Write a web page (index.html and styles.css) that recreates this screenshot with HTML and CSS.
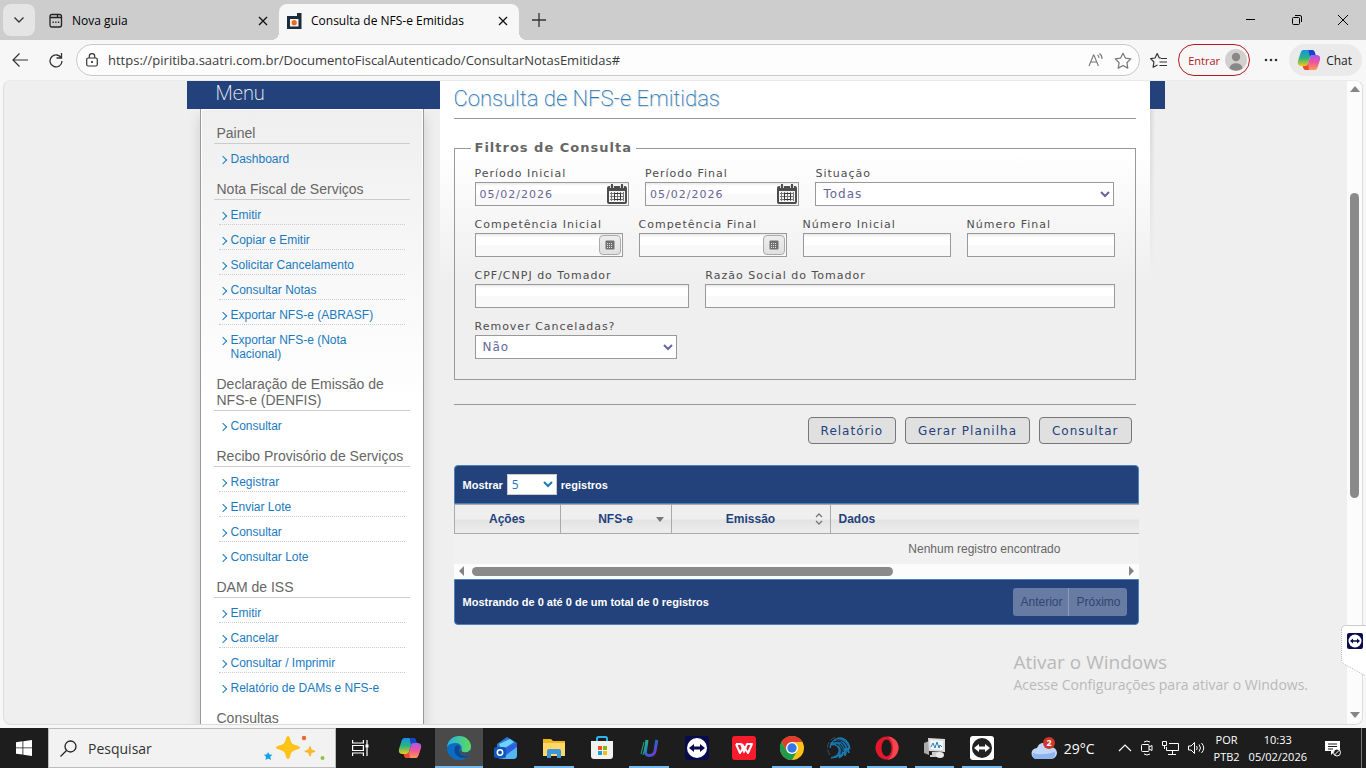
FILE: index.html
```html
<!DOCTYPE html>
<html lang="pt-BR">
<head>
    <meta charset="UTF-8">
    <meta name="viewport" content="width=device-width, initial-scale=1.0">
    <title>Consulta de NFS-e Emitidas</title>
    <link rel="stylesheet" href="styles.css">
</head>
<body>
    <!-- Abas do navegador -->
    <div class="tab-bar">
        <button class="tab-list" aria-label="Abas"><svg width="12" height="8" viewBox="0 0 12 8"><path d="M1.500 1.500 6 6l4.500-4.500" fill="none" stroke="#333" stroke-width="1.300"/></svg></button>
        <div class="tab">
            <svg width="14" height="16" viewBox="0 0 14 16" fill="none" stroke="#222" stroke-width="1.300"><path d="M3 1.500h5.500v3h4V12q0 2-2 2H3q-2 0-2-2V3.500q0-2 2-2zM1 4.500h8M9 1.500h1.500q2 0 2 2v1"/><path d="M3.500 9.300h1.300M6.200 9.300h1.300M8.900 9.300h1.300" stroke-width="1.500"/></svg>
            <span>Nova guia</span>
            <button aria-label="Fechar aba"><svg width="10" height="10" viewBox="0 0 10 10"><path d="m1 1 8 8M9 1 1 9" stroke="#111" stroke-width="1.300"/></svg></button>
        </div>
        <div class="tab active">
            <svg width="15" height="16" viewBox="0 0 15 16"><path d="M10 0h4.500v16H0V3h10z" fill="#1c2c3b"/><path d="M3 6h8.500v7.500H3z" fill="#f4f4f4"/><circle cx="7.200" cy="9.700" r="2.600" fill="#ee6a1d"/></svg>
            <span>Consulta de NFS-e Emitidas</span>
            <button aria-label="Fechar aba"><svg width="10" height="10" viewBox="0 0 10 10"><path d="m1 1 8 8M9 1 1 9" stroke="#111" stroke-width="1.300"/></svg></button>
        </div>
        <button class="new-tab" aria-label="Nova aba"><svg width="14" height="14" viewBox="0 0 14 14"><path d="M7 0v14M0 7h14" stroke="#333" stroke-width="1.300"/></svg></button>
        <div class="window-buttons">
            <button aria-label="Minimizar"><svg width="10" height="10" viewBox="0 0 10 10"><path d="M0 4.500h9" stroke="#000"/></svg></button>
            <button aria-label="Restaurar"><svg width="10" height="10" viewBox="0 0 10 10" fill="none" stroke="#000"><rect x=".5" y="2.500" width="7" height="7" rx="1"/><path d="M3 .5h5q1.500 0 1.500 1.500v5"/></svg></button>
            <button aria-label="Fechar"><svg width="10" height="10" viewBox="0 0 10 10"><path d="m0 0 10 10M10 0 0 10" stroke="#000"/></svg></button>
        </div>
    </div>

    <!-- Barra de endereço -->
    <div class="toolbar">
        <button aria-label="Voltar"><svg width="16" height="14" viewBox="0 0 16 14"><path d="M7.500.5 1 7l6.500 6.500M1 7h15" fill="none" stroke="#333" stroke-width="1.200"/></svg></button>
        <button aria-label="Atualizar"><svg width="14" height="16" viewBox="0 0 14 16"><path d="M12.500 6.500A6 6 0 1 0 13 9M12.500 1v5h-5" fill="none" stroke="#333" stroke-width="1.300"/></svg></button>
        <div class="address">
            <svg width="12" height="14" viewBox="0 0 12 14" fill="none" stroke="#333" stroke-width="1.200"><rect x=".7" y="5" width="10.600" height="8" rx="1.500"/><path d="M3.300 5V3.300a2.700 2.700 0 0 1 5.400 0V5"/><circle cx="6" cy="9" r=".5" fill="#333"/></svg>
            <input type="text" aria-label="Endereço" value="https://piritiba.saatri.com.br/DocumentoFiscalAutenticado/ConsultarNotasEmitidas#">
            <button aria-label="Ler em voz alta"><svg width="16" height="16" viewBox="0 0 16 16" fill="none" stroke="#777" stroke-width="1.100"><path d="M1 14 5.500 3h.4L10.400 14M2.700 10h6"/><path d="M9.500 3q1.500 1 1.500 3M11.500 1.500q2.700 2 2.500 5.500"/></svg></button>
            <button aria-label="Favorito"><svg width="18" height="17" viewBox="0 0 18 17"><path d="m9 1.200 2.400 4.900 5.400.8-3.900 3.800.9 5.400L9 13.500l-4.800 2.600.9-5.400L1.200 6.900l5.400-.8z" fill="none" stroke="#777" stroke-width="1.200" stroke-linejoin="round"/></svg></button>
        </div>
        <button aria-label="Favoritos"><svg width="18" height="17" viewBox="0 0 18 17" fill="none" stroke="#333" stroke-width="1.200" stroke-linejoin="round"><path d="M11 6 9.300 6 7.200 1.500 5 6l-4.400.7L3.900 10l-.8 5.300L7.500 13"/><path d="M11 6.500h6M9.500 10H17M9.500 13.500H17"/></svg></button>
        <button class="sign-in">Entrar <svg width="22" height="22" viewBox="0 0 22 22"><circle cx="11" cy="11" r="11" fill="#d2d0ce"/><circle cx="11" cy="8" r="4.200" fill="#8a8886"/><path d="M4.500 19.500c.5-7 12.500-7 13 0a11 11 0 0 1-13 0z" fill="#8a8886"/></svg></button>
        <button class="more" aria-label="Mais"><svg width="14" height="4" viewBox="0 0 14 4" fill="#333"><circle cx="2" cy="2" r="1.300"/><circle cx="7" cy="2" r="1.300"/><circle cx="12" cy="2" r="1.300"/></svg></button>
        <button class="chat"><svg width="24" height="22" viewBox="0 0 24 22"><use href="#copilot"/></svg> Chat</button>
    </div>

    <!-- Página -->
    <div class="viewport">
        <div class="page">
            <div class="portal">
                <nav class="sidebar">
                    <h2>Menu</h2>
                    <div class="menu">
                        <h3>Painel</h3>
                        <ul>
                            <li><a href="#">Dashboard</a></li>
                        </ul>
                        <h3>Nota Fiscal de Serviços</h3>
                        <ul>
                            <li><a href="#">Emitir</a></li>
                            <li><a href="#">Copiar e Emitir</a></li>
                            <li><a href="#">Solicitar Cancelamento</a></li>
                            <li><a href="#">Consultar Notas</a></li>
                            <li><a href="#">Exportar NFS-e (ABRASF)</a></li>
                            <li><a href="#">Exportar NFS-e (Nota Nacional)</a></li>
                        </ul>
                        <h3>Declaração de Emissão de NFS-e (DENFIS)</h3>
                        <ul>
                            <li><a href="#">Consultar</a></li>
                        </ul>
                        <h3>Recibo Provisório de Serviços</h3>
                        <ul>
                            <li><a href="#">Registrar</a></li>
                            <li><a href="#">Enviar Lote</a></li>
                            <li><a href="#">Consultar</a></li>
                            <li><a href="#">Consultar Lote</a></li>
                        </ul>
                        <h3>DAM de ISS</h3>
                        <ul>
                            <li><a href="#">Emitir</a></li>
                            <li><a href="#">Cancelar</a></li>
                            <li><a href="#">Consultar / Imprimir</a></li>
                            <li><a href="#">Relatório de DAMs e NFS-e</a></li>
                        </ul>
                        <h3>Consultas</h3>
                    </div>
                </nav>

                <main class="content">
                    <h1>Consulta de NFS-e Emitidas</h1>

                    <form>
                        <fieldset>
                            <legend>Filtros de Consulta</legend>
                            <div class="row periods">
                                <div class="field">
                                    <label for="periodo-inicial">Período Inicial</label>
                                    <div class="box">
                                        <input type="text" id="periodo-inicial" value="05/02/2026">
                                        <button type="button" class="pick" aria-label="Calendário"><svg width="20" height="20" viewBox="0 0 20 20"><use href="#calendar"/></svg></button>
                                    </div>
                                </div>
                                <div class="field">
                                    <label for="periodo-final">Período Final</label>
                                    <div class="box">
                                        <input type="text" id="periodo-final" value="05/02/2026">
                                        <button type="button" class="pick" aria-label="Calendário"><svg width="20" height="20" viewBox="0 0 20 20"><use href="#calendar"/></svg></button>
                                    </div>
                                </div>
                                <div class="field">
                                    <label for="situacao">Situação</label>
                                    <select id="situacao"><option>Todas</option></select>
                                </div>
                            </div>
                            <div class="row numbers">
                                <div class="field">
                                    <label for="comp-inicial">Competência Inicial</label>
                                    <div class="box">
                                        <input type="text" id="comp-inicial">
                                        <button type="button" class="month" aria-label="Calendário"><svg width="10" height="10" viewBox="0 0 10 10"><use href="#month"/></svg></button>
                                    </div>
                                </div>
                                <div class="field">
                                    <label for="comp-final">Competência Final</label>
                                    <div class="box">
                                        <input type="text" id="comp-final">
                                        <button type="button" class="month" aria-label="Calendário"><svg width="10" height="10" viewBox="0 0 10 10"><use href="#month"/></svg></button>
                                    </div>
                                </div>
                                <div class="field">
                                    <label for="num-inicial">Número Inicial</label>
                                    <div class="box"><input type="text" id="num-inicial"></div>
                                </div>
                                <div class="field">
                                    <label for="num-final">Número Final</label>
                                    <div class="box"><input type="text" id="num-final"></div>
                                </div>
                            </div>
                            <div class="row taker">
                                <div class="field">
                                    <label for="cpf">CPF/CNPJ do Tomador</label>
                                    <div class="box"><input type="text" id="cpf"></div>
                                </div>
                                <div class="field">
                                    <label for="razao">Razão Social do Tomador</label>
                                    <div class="box"><input type="text" id="razao"></div>
                                </div>
                            </div>
                            <div class="row canceled">
                                <div class="field">
                                    <label for="remover">Remover Canceladas?</label>
                                    <select id="remover"><option>Não</option></select>
                                </div>
                            </div>
                        </fieldset>
                        <div class="actions">
                            <button type="button">Relatório</button>
                            <button type="button">Gerar Planilha</button>
                            <button type="button">Consultar</button>
                        </div>
                    </form>

                    <!-- Tabela de resultados -->
                    <div class="results">
                        <div class="results-top">
                            <label for="mostrar">Mostrar</label>
                            <select id="mostrar"><option>5</option></select>
                            <span>registros</span>
                        </div>
                        <div class="table-wrap">
                            <table>
                                <thead>
                                    <tr>
                                        <th class="col-actions">Ações</th>
                                        <th class="col-nfse"><div class="sort">NFS-e <svg width="8" height="5" viewBox="0 0 8 5"><path d="M0 0h8L4 5z" fill="#777"/></svg></div></th>
                                        <th class="col-date"><div class="sort">Emissão <svg width="8" height="12" viewBox="0 0 8 12"><path d="m1 4 3-3 3 3M1 8l3 3 3-3" fill="none" stroke="#777" stroke-width="1.300"/></svg></div></th>
                                        <th class="col-data">Dados</th>
                                    </tr>
                                </thead>
                                <tbody>
                                    <tr><td colspan="4">Nenhum registro encontrado</td></tr>
                                </tbody>
                            </table>
                        </div>
                        <div class="h-scroll">
                            <svg width="5" height="10" viewBox="0 0 5 10"><path d="M5 0v10L0 5z" fill="#858585"/></svg>
                            <div class="h-track"><div class="h-thumb"></div></div>
                            <svg width="5" height="10" viewBox="0 0 5 10"><path d="M0 0v10l5-5z" fill="#858585"/></svg>
                        </div>
                        <div class="results-bottom">
                            <span>Mostrando de 0 até 0 de um total de 0 registros</span>
                            <div class="pager">
                                <button disabled>Anterior</button>
                                <button disabled>Próximo</button>
                            </div>
                        </div>
                    </div>
                </main>
            </div>
        </div>
        <div class="v-scroll">
            <svg width="10" height="6" viewBox="0 0 10 6"><path d="M0 6h10L5 0z" fill="#858585"/></svg>
            <div class="v-track"><div class="v-thumb"></div></div>
            <svg width="10" height="6" viewBox="0 0 10 6"><path d="M0 0h10L5 6z" fill="#858585"/></svg>
        </div>
    </div>

    <div class="watermark">
        <div class="watermark-title">Ativar o Windows</div>
        <div>Acesse Configurações para ativar o Windows.</div>
    </div>

    <div class="side-tab">
        <svg width="25" height="52" viewBox="0 0 25 52"><path d="M25 .5H5Q.5.500.5 5v30q0 2.500 2.500 4L25 51z" fill="#fff"/><path d="M25 .5H5Q.5.500.5 5" fill="none" stroke="#ccc"/><path d="M.5 5v30q0 2.500 2.500 4L25 51" fill="none" stroke="#bbb" stroke-dasharray="1 1"/><rect x="6" y="8" width="16" height="16" rx="2" fill="#0a0a50"/><circle cx="14" cy="16" r="6.500" fill="#fff"/><path d="m9 16 3-2.500v1.700h4v-1.700l3 2.500-3 2.500v-1.700h-4v1.700z" fill="#0a0a50"/></svg>
    </div>

    <!-- Barra de tarefas -->
    <div class="taskbar">
        <button class="start" aria-label="Iniciar"><svg width="16" height="16" viewBox="0 0 16 16" fill="#fff"><path d="m0 2.200 6.500-.9v6.200H0zM7.300 1.200 16 0v7.500H7.300zM0 8.300h6.500v6.300L0 13.700zM7.300 8.300H16V16l-8.700-1.200z"/></svg></button>
        <div class="search">
            <svg width="17" height="17" viewBox="0 0 17 17" fill="none" stroke="#222" stroke-width="1.300"><circle cx="10.500" cy="6.500" r="5.500"/><path d="M6.500 10.500.5 16.500"/></svg>
            <input type="text" placeholder="Pesquisar" aria-label="Pesquisar">
            <svg width="62" height="26" viewBox="0 0 62 26"><path d="M24 1q1.700 0 2.600 4.500.9 3.500 4.400 4.500 5 1 5 2.500t-5 2.700q-3.500 1-4.400 4.300Q25.700 24 24 24t-2.600-4.500q-.9-3.300-4.400-4.300-5-1.200-5-2.700T17 10q3.500-1 4.400-4.500Q22.300 1 24 1z" fill="#fcc419"/><path d="M46 11q1 0 1.600 3.400Q51.500 15.400 51.500 16.300t-3.900 1.700Q47 21.500 46 21.500T44.400 18q-3.900-.8-3.900-1.700t3.900-1.900Q45 11 46 11z" fill="#f9b82c"/><path d="m4 17 1.500 2.500 3 .2-2.200 2L7 25l-2.800-1.400L1.500 25l.6-3L0 19.800l3-.5z" fill="#0fa4ea"/><circle cx="40" cy="3" r="2.200" fill="#f0642d"/><circle cx="58.500" cy="23" r="2" fill="#8cc63f"/></svg>
        </div>
        <button class="task-view" aria-label="Visão de tarefas"><svg width="17" height="16" viewBox="0 0 17 16" fill="none" stroke="#fff" stroke-width="1.200"><path d="M.6 0v3h10.800V0M.6 16v-3h10.800v3M.6 5.500h10.800v5H.6zM15 0v16"/><path d="M13.500 6h3" stroke-width="3"/></svg></button>
        <button class="copilot" aria-label="Copilot"><svg width="24" height="22" viewBox="0 0 24 22">
            <defs>
                <linearGradient id="cp-left" x1="0" y1="0" x2="0" y2="1"><stop offset="0" stop-color="#1a8fee"/><stop offset=".5" stop-color="#28b67a"/><stop offset="1" stop-color="#f2c91c"/></linearGradient>
                <linearGradient id="cp-right" x1="0" y1="0" x2="0" y2="1"><stop offset="0" stop-color="#a657f0"/><stop offset=".5" stop-color="#f0569a"/><stop offset="1" stop-color="#ff9a50"/></linearGradient>
                <g id="copilot">
                    <path d="M6 1h9q2 0 2.700 2l.9 3h-3q-2 0-2.600 2l-2 7q-.6 2-2.600 2H4q-4-.5-3-5L3.500 4Q4.500 1 6 1z" fill="url(#cp-left)"/>
                    <path d="M11.500 1H15q2 0 2.700 2l.9 3h-3q-2 0-2.600 2z" fill="#1745c9"/>
                    <path d="M18 21H9q-2 0-2.700-2l-.6-2h2.700q2 0 2.600-2l2-7q.6-2 2.600-2H20q4 .5 3 5l-2.500 7.500Q19.500 21 18 21z" fill="url(#cp-right)"/>
                    <path d="M12 21H9q-2 0-2.700-2l-.6-2h2.700q2 0 2.600-2z" fill="#ec4b2b"/>
                </g>
                <g id="calendar">
                    <path d="M0 4q0-2 2-2h2V0h2v2h8V0h2v2h2q2 0 2 2v14q0 2-2 2H2q-2 0-2-2z" fill="#4d4d4d"/>
                    <path d="M2 7h16v11H2z" fill="#f4f4f4"/>
                    <path d="M3 9.500h14M3 12.500h14M3 15.500h14M4.500 8v9M7.500 8v9M10.500 8v9M13.500 8v9M16.500 8v9" stroke="#777" fill="none"/>
                    <path d="M7.500 9.500h6v6h-6z" fill="none" stroke="#333"/>
                    <path d="M3.500 1v3M6.500 1v3M13.500 1v3M16.500 1v3" stroke="#ddd"/>
                </g>
                <g id="month">
                    <rect x=".5" y=".5" width="9" height="9" rx="1" fill="#707070"/>
                    <path d="M2 3.500h6M2 5.500h6M2 7.500h6" stroke="#e2e2e2" stroke-dasharray="1 1"/>
                </g>
                <linearGradient id="edge-top" x1="0" y1="0" x2="1" y2="0"><stop offset="0" stop-color="#2aaee8"/><stop offset="1" stop-color="#5ddc58"/></linearGradient>
                <linearGradient id="u-app" x1="0" y1="0" x2="1" y2="1"><stop offset="0" stop-color="#24c080"/><stop offset=".5" stop-color="#2866d8"/><stop offset="1" stop-color="#8b2bc9"/></linearGradient>
            </defs>
            <use href="#copilot"/></svg></button>
        <div class="apps">
            <button class="open current" aria-label="Edge"><svg width="24" height="24" viewBox="0 0 24 24"><circle cx="12" cy="12" r="12" fill="#0c6cc4"/><path d="M0 11C1 4 6 0 12 0c7 0 12 5 12 10.500 0 4-3 6-6 6-2.500 0-4-1-3.500-2.500C16 10 12 6.500 8 7c-4 .3-7 2-8 4z" fill="url(#edge-top)"/><path d="M9 9.500c-4 5 0 12.500 7 12.500 3 0 5-1 6.500-3-4 2-10 0-10.500-4-.3-2 1-3 1-3.500 0-1.500-2-3-4-2z" fill="#0b4a93"/><path d="M14.500 14c-.4 1.500 1 2.500 3.500 2.500 2 0 4-.8 5-2.500l-.5 4.500c-4 1.700-10-.2-10.200-4z" fill="#4a4a4a"/></svg></button>
            <button aria-label="Outlook"><svg width="24" height="24" viewBox="0 0 24 24"><path d="M3 8 13 1l10 6v12q0 4-4 4H7q-4 0-4-4z" fill="#2a78dc"/><path d="m5 8 11-5 4 3-12 8z" fill="#70d2fa"/><path d="m6 14 17-7v11q0 5-5 5H9z" fill="#2d60df"/><path d="M8 22 23 11v8q0 4-4 4H9z" fill="#54b5f4"/><rect y="11" width="12" height="11" rx="2" fill="#0f57b8"/><circle cx="6" cy="16.500" r="2.700" fill="none" stroke="#fff" stroke-width="1.500"/></svg></button>
            <button class="open" aria-label="Arquivos"><svg width="22" height="20" viewBox="0 0 22 20"><path d="M0 1h8l2 2h12v15H0z" fill="#f3b71d"/><path d="M0 5h22v13H0z" fill="#ffd869"/><path d="M4 20v-7q0-2 2-2h10q2 0 2 2v7h-4v-4H8v4z" fill="#3c97dc"/></svg></button>
            <button aria-label="Loja"><svg width="24" height="24" viewBox="0 0 24 24"><path d="M7 7V2.500Q7 1 8.500 1h7Q17 1 17 2.500V7" fill="none" stroke="#2cb5ec" stroke-width="2"/><path d="M1 5h22v15q0 3-3 3H4q-3 0-3-3z" fill="#f2f2f2"/><path d="M8 10h4v4H8z" fill="#f25022"/><path d="M13 10h4v4h-4z" fill="#7fba00"/><path d="M8 15h4v4H8z" fill="#00a4ef"/><path d="M13 15h4v4h-4z" fill="#ffb900"/></svg></button>
            <button class="open" aria-label="Aplicativo"><svg width="20" height="20" viewBox="0 0 20 20" fill="none"><path d="M8 2 6.500 13q-.5 4.500 4 4.500t5.500-4.500L17.800 2" stroke="url(#u-app)" stroke-width="3"/><path d="M5 4 2 16M8 2 4 17" stroke="#24a780" stroke-width="1"/></svg></button>
            <button aria-label="TeamViewer"><svg width="24" height="24" viewBox="0 0 24 24"><rect width="24" height="24" rx="3" fill="#090b4f"/><circle cx="12" cy="12" r="10" fill="#fff"/><path d="m4 12 5-4v2.500h6V8l5 4-5 4v-2.500H9V16z" fill="#090b4f"/></svg></button>
            <button aria-label="WPS"><svg width="24" height="24" viewBox="0 0 24 24"><rect width="24" height="24" rx="3" fill="#f81b2b"/><path d="M4 8h5l3 8 3-8h5l-4 9-6-9M4 8l4 9 3-5" fill="none" stroke="#fff" stroke-width="2" stroke-linejoin="round"/></svg></button>
            <button class="open" aria-label="Chrome"><svg width="24" height="24" viewBox="0 0 24 24"><circle cx="12" cy="12" r="12" fill="#fbc116"/><path d="M1.600 6a12 12 0 0 1 20.800 0H12l-5.200 9z" fill="#e33b2e"/><path d="M1.600 6A12 12 0 0 0 12 24l5.200-9-5.200 3-5.200-3z" fill="#229a4c"/><circle cx="12" cy="12" r="6" fill="#fff"/><circle cx="12" cy="12" r="4.700" fill="#3578e5"/></svg></button>
            <button class="open" aria-label="Águia"><svg width="24" height="24" viewBox="0 0 24 24" fill="none" stroke="#1d80ba"><path d="M3 19A11 11 0 0 1 8 1.500" stroke="#3a5260" stroke-dasharray="6 2"/><path d="M4 7q5-6 11-5 7 2 8 11l-2-2q1 3 1 6l-3-4q1 4-1 7l-1-4q-1 5-5 6l1-3q-3 3-9 3 7-2 8-6 1-3-2-6-2-2-6-1l-1 3z" fill="#1473ab"/><path d="M6 6q9-3 12 6M9 4q9-1 12 8M9 8q7 2 5 10M13 8q4 3 3 8" stroke="#1d1d1d"/></svg></button>
            <button class="open" aria-label="Opera"><svg width="24" height="24" viewBox="0 0 24 24"><circle cx="12" cy="12" r="11.500" fill="#e3182d"/><path d="M12 .5a11.500 11.500 0 0 1 0 23c4-1 6-6 6-11.500S16 1.500 12 .5z" fill="#f5454f"/><ellipse cx="11.500" cy="12" rx="5" ry="8.500" fill="#1c1c1c"/></svg></button>
            <button class="open" aria-label="Monitor"><svg width="24" height="24" viewBox="0 0 24 24"><path d="m1 7 5-2v14l-5-2z" fill="#aaa"/><path d="m5 2 17 1v13L6 15z" fill="#ddd"/><path d="m7 4 13 1v9L8 13z" fill="#f1f6fa"/><path d="m8 11 2-4 2 5 2-6 2 6 1-3 2 2" fill="none" stroke="#277fb5"/><path d="M9 16h8v3H9zM7 19h13v2H7z" fill="#ccc"/><ellipse cx="17" cy="19" rx="4" ry="3" fill="#e8e8e8"/></svg></button>
            <button class="open" aria-label="TeamViewer Host"><svg width="24" height="24" viewBox="0 0 24 24"><rect width="24" height="24" rx="3" fill="#fff"/><circle cx="12" cy="12" r="10" fill="#222"/><path d="m4 12 5-4v2.500h6V8l5 4-5 4v-2.500H9V16z" fill="#fff"/></svg></button>
        </div>
        <div class="tray">
            <button class="weather">
                <svg width="26" height="24" viewBox="0 0 26 24"><path d="M6 23a5.500 5.500 0 0 1 0-11 7.500 7.500 0 0 1 14-1 6 6 0 0 1 0 12z" fill="#c1d7f8"/><path d="M4 23q-4-3-2-6 9 3 22-1 1 5-4 7z" fill="#8fb5f0"/><circle cx="18" cy="7" r="6" fill="#d3352b"/><text x="18" y="10" class="badge-text">2</text></svg>
                29°C
            </button>
            <button aria-label="Ícones ocultos"><svg width="14" height="8" viewBox="0 0 14 8"><path d="m1 7 6-6 6 6" fill="none" stroke="#fff" stroke-width="1.200"/></svg></button>
            <button aria-label="Câmera"><svg width="12" height="16" viewBox="0 0 12 16" fill="none" stroke="#fff"><rect x=".5" y="4.500" width="7.500" height="7" rx="1"/><path d="m8 7 3-1.500v5L8 9M3 2q3-2 6 0M3 14q3 2 6 0"/></svg></button>
            <button aria-label="Rede"><svg width="17" height="14" viewBox="0 0 17 14" fill="none" stroke="#fff"><path d="M7 2.500h9.500v7H4.500V6M10.500 9.500v4M6 13.500h8M.5.500h4v4h-4zM2.500 4.500V8"/></svg></button>
            <button aria-label="Volume"><svg width="17" height="14" viewBox="0 0 17 14" fill="none" stroke="#fff"><path d="M.5 5H3l3.500-3.500v11L3 9H.5zM8.500 5q1.500 2 0 4M11 3.500q3 3.500 0 7M13.500 2q4.500 5 0 10"/></svg></button>
            <div class="lang">POR<br>PTB2</div>
            <div class="clock">10:33<br>05/02/2026</div>
            <button class="notify" aria-label="Notificações"><svg width="18" height="17" viewBox="0 0 18 17"><path d="M1 1h15v10h-5l-4 4v-4H1z" fill="#fff"/><path d="M4 4h9M4 6.500h9M4 9h5" stroke="#1d1d1d"/><circle cx="13" cy="12.500" r="3.500" fill="#1d1d1d" stroke="#fff"/><path d="m10.500 15 5-5" stroke="#fff"/></svg></button>
        </div>
    </div>
</body>
</html>
```
FILE: styles.css
```css
* {
    box-sizing: border-box;
}

body {
    margin: 0;
    height: 100vh;
    display: flex;
    flex-direction: column;
    overflow: hidden;
    position: relative;
    background-color: #f7f7f7;
    font-family: "Liberation Sans", Arial, sans-serif;
    font-size: 12px;
}

button {
    border: none;
    padding: 0;
    background: transparent;
    font-family: inherit;
    display: flex;
    align-items: center;
    justify-content: center;
    flex-shrink: 0;
}

svg {
    display: block;
    flex-shrink: 0;
}

h1, h2, h3, ul {
    margin: 0;
    padding: 0;
}

/* Abas */
.tab-bar {
    height: 40px;
    flex-shrink: 0;
    background-color: #cdcdcd;
    display: flex;
    align-items: center;
    padding-left: 3px;
    font-family: "Open Sans", sans-serif;
    font-size: 12px;
}

.tab-list {
    width: 32px;
    height: 32px;
    border-radius: 8px;
    background-color: #e5e5e5;
}

.tab {
    width: 240px;
    height: 36px;
    margin-top: 4px;
    padding: 0 11px 3px 8px;
    display: flex;
    align-items: center;
    gap: 9px;
    position: relative;
}

.tab:not(.active) {
    margin-left: 4px;
    padding-left: 10px;
}

.tab span {
    flex: 1;
    white-space: nowrap;
}

.tab.active {
    background-color: #f7f7f7;
    border-radius: 8px 8px 0 0;
}

.tab.active::before,
.tab.active::after {
    content: "";
    position: absolute;
    bottom: 0;
    width: 8px;
    height: 8px;
}

.tab.active::before {
    left: -8px;
    background: radial-gradient(circle at 0 0, transparent 8px, #f7f7f7 8px);
}

.tab.active::after {
    right: -8px;
    background: radial-gradient(circle at 100% 0, transparent 8px, #f7f7f7 8px);
}

.new-tab {
    width: 40px;
    height: 40px;
}

.window-buttons {
    margin-left: auto;
    display: flex;
}

.window-buttons button {
    width: 46px;
    height: 40px;
}

/* Barra de endereço */
.toolbar {
    height: 40px;
    flex-shrink: 0;
    display: flex;
    align-items: center;
    padding: 0 4px 0 12px;
    gap: 10px;
    font-family: "Open Sans", sans-serif;
}

.toolbar > button:nth-child(2) {
    margin: 0 3px 0 11px;
}

.address {
    flex: 1;
    height: 32px;
    display: flex;
    align-items: center;
    gap: 10px;
    padding: 0 7px 0 9px;
    background-color: #fdfdfd;
    border: 1px solid #c9c9c9;
    border-radius: 16px;
}

.address input {
    flex: 1;
    min-width: 0;
    border: none;
    outline: none;
    padding: 0;
    background: transparent;
    color: #3b3b3b;
    font-family: inherit;
    font-size: 13px;
}

.sign-in {
    height: 32px;
    gap: 5px;
    padding: 0 2px 0 9px;
    border: 1px solid #b4191d;
    border-radius: 16px;
    color: #b4191d;
    font-size: 11px;
}

.more {
    margin: 0 1px 0 4px;
}

.chat {
    height: 32px;
    gap: 5px;
    padding: 0 10px 0 8px;
    border-radius: 16px;
    background-color: #eaeaea;
    color: #222;
    font-size: 12px;
}

/* Página */
.viewport {
    flex: 1;
    min-height: 0;
    margin: 0 3px 3px;
    display: flex;
    overflow: hidden;
    background-color: #efefef;
    border: 1px solid #ddd;
    border-top-color: #eaeaea;
    border-radius: 8px;
}

.page {
    flex: 1;
    min-width: 0;
    overflow: hidden;
}

.portal {
    max-width: 978px;
    margin: 0 auto;
    padding: 0 15px 0 13px;
    display: flex;
    align-items: flex-start;
    gap: 16px;
    background: linear-gradient(#23427b, #23427b) top / 100% 28px no-repeat;
}

/* Menu lateral */
.sidebar {
    width: 224px;
    flex-shrink: 0;
}

.sidebar h2 {
    height: 28px;
    line-height: 24px;
    padding-left: 16px;
    color: #fff;
    font-family: Roboto, sans-serif;
    font-size: 20px;
    font-weight: 200;
}

.menu {
    border: 1px solid #999;
    border-top: none;
    padding: 16px 13px;
    background: linear-gradient(#efefef, #fff 300px);
    box-shadow: inset 0 0 0 1px #fff, 0 8px 12px rgba(0, 0, 0, 0.15);
}

.menu h3 {
    padding: 0 0 2px 3px;
    color: #666;
    font-size: 14px;
    font-weight: normal;
    line-height: 16px;
    border-bottom: 1px solid #ccc;
}

.menu ul {
    list-style: none;
    margin: 0 5px 13px;
}

.menu li {
    padding: 8px 12px 2px;
    line-height: 14px;
    border-bottom: 1px dotted #ccc;
    position: relative;
}

.menu li:last-child {
    border-bottom: none;
}

.menu li::before {
    content: "";
    position: absolute;
    left: 1px;
    top: 13px;
    width: 5px;
    height: 5px;
    border-top: 1px solid #1a7abf;
    border-right: 1px solid #1a7abf;
    transform: rotate(45deg);
}

.menu a {
    color: #1a7abf;
    text-decoration: none;
}

/* Conteúdo */
.content {
    flex: 1;
    min-width: 0;
    padding: 0 14px;
    background: linear-gradient(#fff 70px, #efefef 200px);
    position: relative;
    font-family: Verdana, "DejaVu Sans", sans-serif;
}

.content::after {
    content: "";
    position: absolute;
    top: 29px;
    left: 100%;
    width: 5px;
    height: 160px;
    background: linear-gradient(to right, rgba(0, 0, 0, 0.1), transparent);
    -webkit-mask-image: linear-gradient(#000, transparent);
    mask-image: linear-gradient(#000, transparent);
}

h1 {
    height: 38px;
    line-height: 36px;
    border-bottom: 1px solid #999;
    color: #1a7abf;
    font-family: Roboto, sans-serif;
    font-size: 22px;
    font-weight: 200;
    text-shadow: 1px 1px 1px #ccc;
}

form {
    padding-top: 21px;
}

fieldset {
    margin: 0;
    padding: 9px 20px 20px 20px;
    border: 1px solid #999;
}

legend {
    margin-left: -4px;
    padding: 0 4px;
    color: #666;
    font-size: 13px;
    font-weight: bold;
    line-height: 16px;
    letter-spacing: 1px;
}

.row {
    display: grid;
    gap: 16px;
    margin-bottom: 10px;
}

.row:last-child {
    margin-bottom: 0;
}

.periods {
    grid-template-columns: 31fr 31fr 60fr;
}

.numbers {
    grid-template-columns: repeat(4, 1fr);
}

.taker {
    grid-template-columns: 21fr 40fr;
}

.canceled {
    grid-template-columns: repeat(3, 1fr);
}

.field {
    min-width: 0;
    display: flex;
    flex-direction: column;
}

.field label {
    height: 17px;
    line-height: 17px;
    color: #4d4d4d;
    font-size: 11px;
    letter-spacing: 1px;
    white-space: nowrap;
}

.box,
.field select {
    height: 24px;
    border: 1px solid #999;
    border-radius: 0;
}

.box {
    display: flex;
    align-items: center;
    padding-right: 1px;
    background: linear-gradient(#e8e8e8, #fff 3px, #fff 50%, #f9f9f9 50%);
}

.box input {
    flex: 1;
    min-width: 0;
    height: 22px;
    border: none;
    outline: none;
    background: transparent;
    padding: 0 4px;
    color: #669;
    font-family: inherit;
    font-size: 11px;
    letter-spacing: 1px;
}

.field select {
    padding: 0 3px;
    background-color: #fff;
    color: #669;
    font-family: inherit;
    font-size: 12px;
    letter-spacing: 1px;
}

.month {
    width: 22px;
    height: 20px;
    border: 1px solid #aaa;
    border-radius: 4px;
    background: linear-gradient(#eee, #e0e0e0);
}

.actions {
    margin-top: 24px;
    padding: 12px 4px 0 0;
    border-top: 1px solid #999;
    display: flex;
    justify-content: flex-end;
    gap: 9px;
}

.actions button {
    height: 27px;
    padding: 0 12px;
    border: 1px solid #777;
    border-radius: 4px;
    background-color: #e0e0e0;
    color: #23427b;
    font-size: 12px;
    letter-spacing: 1px;
}

/* Resultados */
.results {
    margin: 21px -3px 0 0;
    font-family: "Liberation Sans", Arial, sans-serif;
}

.results-top,
.results-bottom {
    display: flex;
    align-items: center;
    padding: 0 8px;
    background-color: #23427b;
    border: 1px solid #4b83b8;
    color: #fff;
    font-size: 11px;
    font-weight: bold;
}

.results-top {
    height: 39px;
    gap: 4px;
    border-radius: 4px 4px 0 0;
}

.results-top select {
    width: 50px;
    height: 21px;
    border: 1px solid #ccc;
    background-color: #fff;
    color: #1a7abf;
    font-family: "Open Sans", sans-serif;
    font-size: 12px;
}

.table-wrap {
    overflow: hidden;
}

table {
    width: 155%;
    table-layout: fixed;
    border-collapse: collapse;
}

th {
    height: 29px;
    padding: 0 8px;
    border: 1px solid #aaa;
    background: linear-gradient(#efefef 50%, #e2e2e2 50%, #eee);
    color: #23427b;
}

.col-actions {
    width: 106px;
}

.col-nfse {
    width: 111px;
}

.col-date {
    width: 159px;
}

.col-data {
    text-align: left;
}

.sort {
    display: grid;
    grid-template-columns: 1fr 8px;
    align-items: center;
}

.col-nfse,
.col-date {
    padding: 0 7px 0 15px;
}

td {
    height: 30px;
    padding: 0;
    background-color: #f1f1f1;
    color: #666;
    text-align: center;
}

.h-scroll {
    height: 15px;
    display: flex;
    align-items: center;
    gap: 8px;
    padding: 0 5px;
    background-color: #fcfcfc;
}

.h-track {
    flex: 1;
}

.h-thumb {
    width: 65%;
    height: 9px;
    border-radius: 5px;
    background-color: #8a8a8a;
}

.results-bottom {
    height: 46px;
    justify-content: space-between;
    padding-right: 11px;
    border-radius: 0 0 4px 4px;
}

.pager {
    display: flex;
    border-radius: 3px;
    overflow: hidden;
    background-color: #687ba3;
}

.pager button {
    height: 28px;
    padding: 0 6px 0 7px;
    color: #2e4672;
    font-size: 12px;
}

.pager button + button {
    border-left: 1px solid #8d9cbb;
}

/* Barra de rolagem */
.v-scroll {
    width: 15px;
    display: flex;
    flex-direction: column;
    align-items: center;
    gap: 6px;
    padding: 5px 0 6px;
    background-color: #fcfcfc;
}

.v-track {
    flex: 1;
    display: flex;
    flex-direction: column;
}

.v-track::before {
    content: "";
    flex: 95;
}

.v-track::after {
    content: "";
    flex: 208;
}

.v-thumb {
    flex: 306;
    width: 9px;
    border-radius: 5px;
    background-color: #8a8a8a;
}

.watermark {
    position: absolute;
    right: 58px;
    bottom: 73px;
    color: #b9b9b9;
    font-family: "Open Sans", sans-serif;
    font-size: 14px;
    line-height: 20px;
}

.watermark-title {
    font-size: 19px;
    line-height: 26px;
}

.side-tab {
    position: absolute;
    right: 0;
    bottom: 91px;
}

/* Barra de tarefas */
.taskbar {
    height: 40px;
    flex-shrink: 0;
    display: flex;
    background-color: #1d1d1d;
    color: #fff;
    font-family: "Open Sans", sans-serif;
}

.start,
.task-view {
    width: 48px;
}

.copilot {
    width: 51px;
}

.search {
    width: 288px;
    display: flex;
    align-items: center;
    gap: 11px;
    padding: 0 9px 0 11px;
    background-color: #f2f2f2;
    border: 1px solid #bbb;
}

.search input {
    flex: 1;
    min-width: 0;
    border: none;
    outline: none;
    padding: 0;
    background: transparent;
    font-family: inherit;
    font-size: 14px;
}

.search input::placeholder {
    color: #333;
}

.apps {
    flex: 0 1 571px;
    display: grid;
    grid-template-columns: repeat(12, 1fr);
}

.apps button {
    position: relative;
}

.apps .open::after {
    content: "";
    position: absolute;
    left: 4px;
    right: 4px;
    bottom: 0;
    height: 2px;
    background-color: #76b9ed;
}

.apps .current {
    background-color: #4a4a4a;
}

.apps .current::after {
    left: 0;
    right: 0;
}

.tray {
    margin-left: auto;
    display: flex;
    align-items: center;
    gap: 9px;
    text-align: center;
    font-size: 11px;
    line-height: 17px;
}

.weather {
    gap: 7px;
    margin-right: 14px;
    color: #fff;
    font-size: 14px;
}

.badge-text {
    fill: #fff;
    font-size: 9px;
    font-weight: bold;
    text-anchor: middle;
}

.notify {
    height: 40px;
    padding: 0 19px 0 8px;
    border-right: 1px solid #777;
    margin-right: 4px;
}
```
